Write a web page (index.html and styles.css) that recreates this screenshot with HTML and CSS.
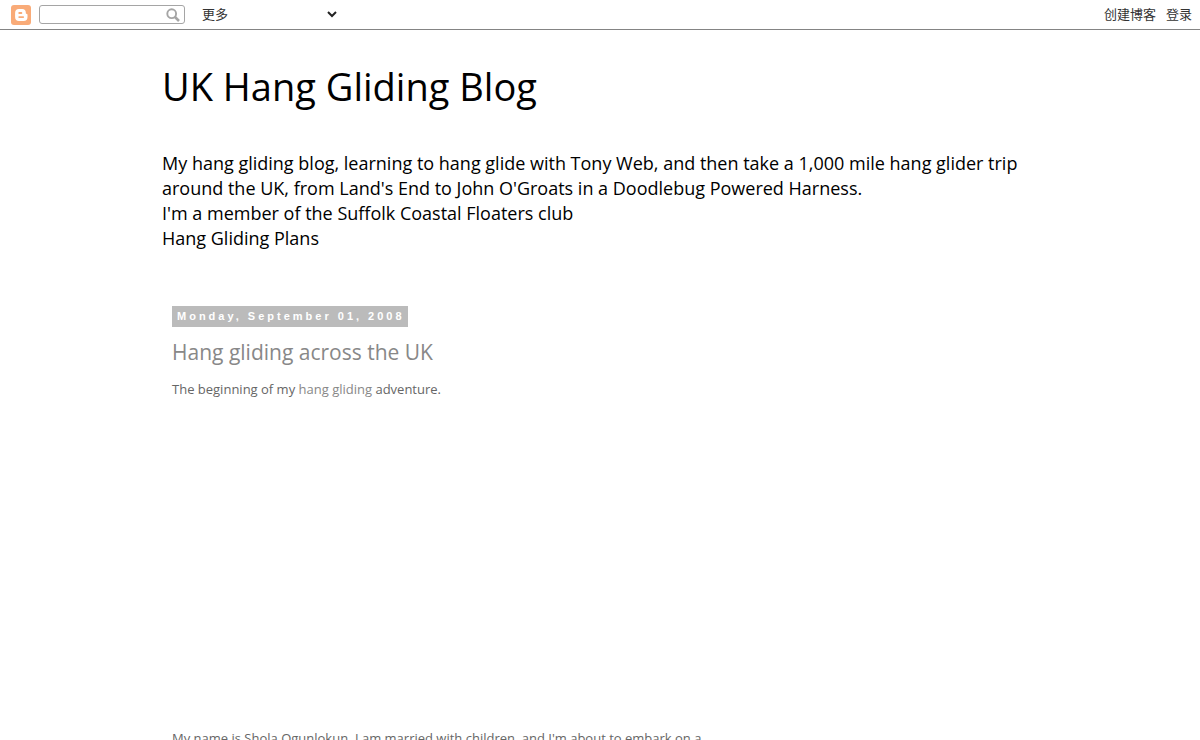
FILE: index.html
```html
<!DOCTYPE html>
<html lang="en">

<head>
    <meta charset="utf-8">
    <meta name="viewport" content="width=device-width, initial-scale=1.0">
    <title>UK Hang Gliding Blog</title>
    <link rel="stylesheet" href="styles.css">
</head>

<body>
    <nav class="navbar" lang="zh-CN">
        <a class="logo" href="#" aria-label="Blogger">
            <svg viewBox="0 0 20 20" width="20" height="20">
                <rect width="20" height="20" rx="3" fill="#f9ab78"/>
                <path fill="#fff" fill-rule="evenodd" d="M8 4h3.2a3.6 3.6 0 0 1 3.6 3.6c0 1 .2 1.3 1 1.3.5 0 .7.3.7.8v2.4a3.9 3.9 0 0 1-3.9 3.9H8a3.9 3.9 0 0 1-3.9-3.9V7.9A3.9 3.9 0 0 1 8 4zm.2 3.1a.9.9 0 0 0 0 1.8h2.2a.9.9 0 0 0 0-1.8zm0 4.1a.9.9 0 0 0 0 1.8h4a.9.9 0 0 0 0-1.8z"/>
            </svg>
        </a>
        <form class="search">
            <input class="search-text" type="text" aria-label="搜索">
            <button class="search-button" type="button" aria-label="搜索">
                <svg viewBox="0 0 14 14" width="14" height="14" fill="none" stroke="#a5a5a5">
                    <circle cx="5.7" cy="5.7" r="4.4" stroke-width="1.9"/>
                    <path d="M9 9l4 4" stroke-width="2.5"/>
                </svg>
            </button>
        </form>
        <div class="more">
            <select class="more-select" aria-label="更多">
                <option>更多</option>
            </select>
            <svg class="arrow" viewBox="0 0 10 7" width="10" height="7" fill="none" stroke="#222" stroke-width="2">
                <path d="M1 1l4 4 4-4"/>
            </svg>
        </div>
        <div class="account">
            <a href="#">创建博客</a>
            <a href="#">登录</a>
        </div>
    </nav>

    <div class="content">
        <header class="header">
            <h1 class="title">UK Hang Gliding Blog</h1>
            <p class="description">My hang gliding blog, learning to hang glide with Tony Web, and then take a 1,000 mile hang glider trip around the UK, from Land's End to John O'Groats in a Doodlebug Powered Harness.<br>
            I'm a member of the Suffolk Coastal Floaters club<br>
            Hang Gliding Plans</p>
        </header>

        <main class="main">
            <h2 class="date-header"><span>Monday, September 01, 2008</span></h2>
            <article class="post">
                <h3 class="post-title">Hang gliding across the UK</h3>
                <p>The beginning of my <a href="#">hang gliding</a> adventure.</p>
                <div class="video"></div>
                <p>My name is Shola Ogunlokun. I am married with children, and I'm about to embark on a</p>
            </article>
        </main>
    </div>
</body>

</html>
```
FILE: styles.css
```css
body {
    margin: 0;
    background: #fff;
    color: #666;
    font: 13px/18px "Trebuchet MS", "Open Sans", sans-serif;
}

a {
    color: #888;
    text-decoration: none;
}

/* top bar */
.navbar {
    display: flex;
    align-items: center;
    height: 29px;
    padding: 0 8px 0 11px;
    border-bottom: 1px solid #848484;
    color: #333;
    font: 13px/20px "Liberation Sans", "Noto Sans CJK SC", sans-serif;
}

.logo {
    display: flex;
}

.search {
    display: flex;
    align-items: center;
    box-sizing: border-box;
    width: 146px;
    height: 19px;
    margin-left: 8px;
    padding-right: 4px;
    border: 1px solid #a5a5a5;
    border-radius: 3px;
}

.search-text {
    flex: 1;
    min-width: 0;
    height: 15px;
    padding: 0 4px;
    border: 0;
    outline: 0;
    background: none;
}

.search-button {
    display: flex;
    padding: 0;
    border: 0;
    background: none;
    cursor: pointer;
}

.more {
    display: flex;
    align-items: center;
    margin-left: 17px;
}

.more-select {
    appearance: none;
    width: 125px;
    padding: 0;
    border: 0;
    background: none;
    color: #333;
    font: inherit;
}

.account {
    display: flex;
    gap: 10px;
    margin-left: auto;
}

.account a {
    color: #333;
}

/* blog */
.content {
    max-width: 876px;
    margin: 0 auto;
    padding: 32px 20px;
}

.header {
    color: #000;
}

.title {
    margin: 0;
    font-size: 38px;
    font-weight: normal;
    line-height: 48px;
}

.description {
    margin: 41px 0 0;
    font-size: 18px;
    line-height: 25px;
}

.main {
    max-width: 530px;
    margin-top: 55px;
    padding: 0 10px;
}

.date-header {
    margin: 0;
    font: bold 11px/15px "Liberation Sans", Arial, sans-serif;
    letter-spacing: 3px;
}

.date-header span {
    display: inline-block;
    padding: 3px;
    padding-left: 5px;
    background: #bbb;
    color: #fff;
}

.post-title {
    margin: 11px 0 14px;
    color: #888;
    font-size: 21px;
    font-weight: normal;
    line-height: 28px;
}

.post p {
    margin: 0;
}

.video {
    height: 331px;
}
```
